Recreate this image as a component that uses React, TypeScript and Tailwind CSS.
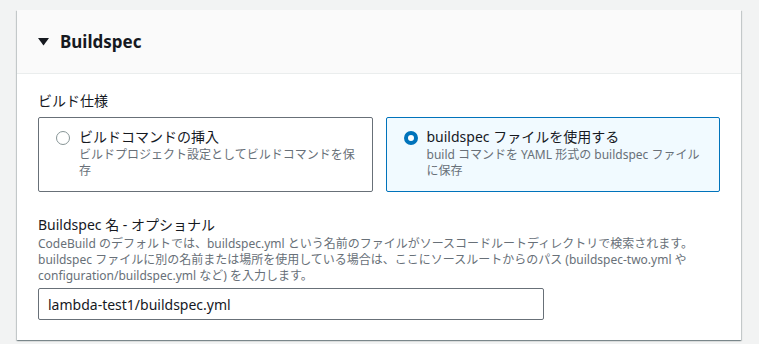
import React from "react";

const font = {
  fontFamily: '"Noto Sans", "Noto Sans CJK JP", sans-serif',
};

type Option = {
  id: string;
  title: string;
  desc: string[];
};

const options: Option[] = [
  {
    id: "inline",
    title: "ビルドコマンドの挿入",
    desc: ["ビルドプロジェクト設定としてビルドコマンドを保", "存"],
  },
  {
    id: "file",
    title: "buildspec ファイルを使用する",
    desc: ["build コマンドを YAML 形式の buildspec ファイル", "に保存"],
  },
];

function Radio({ checked }: { checked: boolean }) {
  if (checked) {
    return (
      <span className="mt-[4px] block h-[14px] w-[14px] shrink-0 rounded-full border-[4px] border-[#0073bb] bg-white" />
    );
  }
  return (
    <span className="mt-[4px] block h-[14px] w-[14px] shrink-0 rounded-full border-[1.5px] border-[#879596] bg-white" />
  );
}

export default function App() {
  const selected = "file";

  return (
    <div className="min-h-[344px] w-full bg-[#f2f3f3] pt-[10px]" style={font}>
      <div className="ml-[17px] w-[724px] bg-white shadow-[0_1px_1px_0_rgba(0,28,36,0.3),1px_1px_1px_0_rgba(0,28,36,0.15),-1px_1px_1px_0_rgba(0,28,36,0.15)]">
        {/* header */}
        <div className="flex h-[64px] items-center gap-[11px] border-b border-[#eaeded] bg-[#fafafa] pl-[21px]">
          <svg width="11" height="8" viewBox="0 0 11 8" className="mt-[1px]">
            <path d="M0 0 L11 0 L5.5 7.5 Z" fill="#16191f" />
          </svg>
          <h2 className="text-[17px] font-bold leading-[22px] text-[#16191f]">
            Buildspec
          </h2>
        </div>

        {/* body */}
        <div className="px-[21px] pt-[16px] pb-[20px]">
          <div className="mb-[5px] text-[14px] leading-[22px] text-[#16191f]">
            ビルド仕様
          </div>
          <div className="grid grid-cols-2 gap-[13px]">
            {options.map((o) => {
              const on = o.id === selected;
              return (
                <div
                  key={o.id}
                  className={
                    on
                      ? "flex h-[75px] gap-[9px] rounded-[2px] border border-[#0073bb] bg-[#f1faff] pl-[17px] pt-[9px]"
                      : "flex h-[75px] gap-[9px] rounded-[2px] border border-[#687078] bg-white pl-[17px] pt-[9px]"
                  }
                >
                  <Radio checked={on} />
                  <div>
                    <div className="whitespace-nowrap text-[14px] leading-[20px] text-[#16191f]">
                      {o.title}
                    </div>
                    {o.desc.map((d) => (
                      <div
                        key={d}
                        className="whitespace-nowrap text-[12px] leading-[16px] text-[#687078]"
                      >
                        {d}
                      </div>
                    ))}
                  </div>
                </div>
              );
            })}
          </div>

          <div className="mt-[22px] text-[14px] leading-[22px] text-[#16191f]">
            Buildspec 名 - オプショナル
          </div>
          <div className="text-[12px] leading-[16px] text-[#687078]">
            <div className="whitespace-nowrap">
              CodeBuild のデフォルトでは、buildspec.yml という名前のファイルがソースコードルートディレクトリで検索されます。
            </div>
            <div className="whitespace-nowrap">
              buildspec ファイルに別の名前または場所を使用している場合は、ここにソースルートからのパス (buildspec-two.yml や
            </div>
            <div className="whitespace-nowrap">
              configuration/buildspec.yml など) を入力します。
            </div>
          </div>
          <input
            type="text"
            defaultValue="lambda-test1/buildspec.yml"
            className="mt-[4px] block h-[32px] w-[506px] rounded-[2px] border border-[#687078] bg-white px-[9px] text-[14px] text-[#16191f] outline-none"
            style={font}
          />
        </div>
      </div>
    </div>
  );
}
